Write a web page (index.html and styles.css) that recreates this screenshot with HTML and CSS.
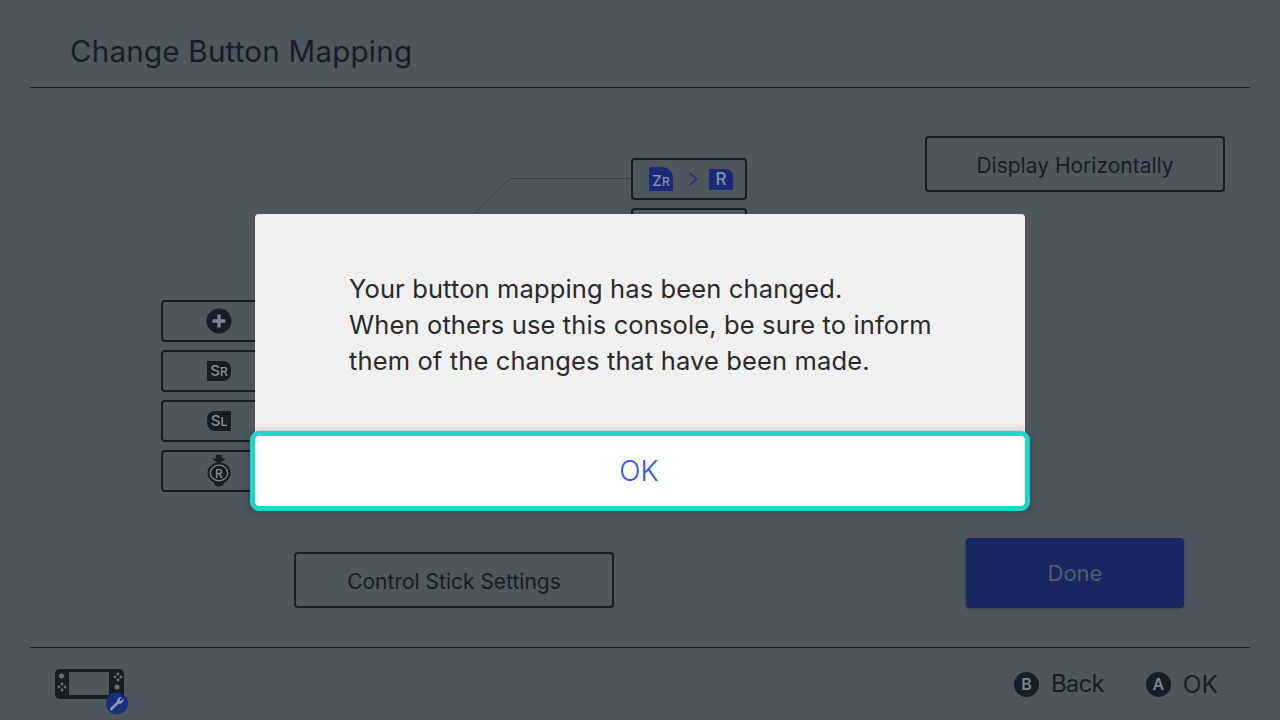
FILE: index.html
```html
<!DOCTYPE html>
<html lang="en">
<head>
<meta charset="utf-8">
<title>Change Button Mapping</title>
<link rel="stylesheet" href="styles.css">
</head>
<body>
<div class="screen">
  <header class="header"><h1 class="title">Change Button Mapping</h1></header>
  <main class="main">
    <section class="diagram">
      <svg class="leader" width="840" height="560" viewBox="0 0 840 560"><path d="M601 90.500H480L430 140.500" fill="none" stroke="#3a4149" stroke-width="1"/></svg>
      <div class="map-btn map-zr">
        <span class="tag tag-zr"><span class="tag-big">Z</span><span class="tag-small">R</span></span>
        <svg class="chev" width="10" height="14" viewBox="0 0 10 14"><path d="M1.500 1L8.500 7L1.500 13" fill="none" stroke="#1f2f6e" stroke-width="1.400"/></svg>
        <span class="tag tag-r">R</span>
      </div>
      <div class="map-btn map-next"></div>
      <div class="left-stack">
        <div class="map-btn">
          <svg width="26" height="26" viewBox="0 0 26 26"><circle cx="13" cy="13" r="12.500" fill="#151d27"/><path d="M13 6.500v13M6.500 13h13" stroke="#7d848d" stroke-width="3.400"/></svg>
        </div>
        <div class="map-btn"><span class="tag-s tag-sr"><span class="s-big">S</span><span class="s-small">R</span></span></div>
        <div class="map-btn"><span class="tag-s tag-sl"><span class="s-big">S</span><span class="s-small">L</span></span></div>
        <div class="map-btn">
          <svg width="26" height="32" viewBox="0 0 26 32"><path d="M10 0h6v3.500h4L13 9 6 3.500h4z" fill="#151d27"/><path d="M7 25h12l-1.500 4a4.500 2.500 0 0 1-9 0z" fill="#151d27"/><ellipse cx="13" cy="18" rx="11.500" ry="10.500" fill="#151d27"/><ellipse cx="13" cy="18" rx="8.700" ry="7.800" fill="none" stroke="#7d848d" stroke-width="1.300"/><text x="13" y="22.500" text-anchor="middle" class="stick-r">R</text></svg>
        </div>
      </div>
      <button class="outline-btn stick-btn">Control Stick Settings</button>
    </section>
    <aside class="side">
      <button class="outline-btn horiz-btn">Display Horizontally</button>
      <button class="done-btn">Done</button>
    </aside>
  </main>
  <footer class="footer">
    <div class="console">
      <svg width="74" height="50" viewBox="0 0 74 50">
        <rect x="1" y="2" width="69" height="30" rx="5" fill="#151d27"/>
        <rect x="15" y="5" width="40" height="23" fill="#4f565e"/>
        <g fill="#6a7078">
          <circle cx="7.500" cy="9" r="2.500"/><circle cx="8" cy="17" r="1.400"/><circle cx="8" cy="23" r="1.400"/><circle cx="5" cy="20" r="1.400"/><circle cx="11" cy="20" r="1.400"/>
          <circle cx="64" cy="7" r="1.400"/><circle cx="64" cy="13" r="1.400"/><circle cx="61" cy="10" r="1.400"/><circle cx="67" cy="10" r="1.400"/><circle cx="63" cy="20" r="2.500"/>
        </g>
        <circle cx="63" cy="36.500" r="11" fill="#1c2f7a"/>
        <path d="M57.500 42L64 35.500" fill="none" stroke="#8d97b8" stroke-width="2.600" stroke-linecap="round"/>
        <path d="M63 35.500a4.500 4.500 0 0 1 5-5.500l-2.500 2.600 1.300 1.500 2.700-2.500a4.500 4.500 0 0 1-5.500 5.300z" fill="#8d97b8"/>
      </svg>
    </div>
    <div class="hints">
      <div class="hint"><span class="glyph">B</span><span class="hint-back">Back</span></div>
      <div class="hint"><span class="glyph">A</span><span>OK</span></div>
    </div>
  </footer>
  <div class="dialog">
    <p class="message">Your button mapping has been changed.<br>When others use this console, be sure to inform<br>them of the changes that have been made.</p>
    <button class="ok-btn">OK</button>
  </div>
</div>
</body>
</html>
```
FILE: styles.css
```css
* { box-sizing: border-box; }
html, body { margin: 0; padding: 0; }
body { width: 1280px; height: 720px; overflow: hidden; background: #4f565e; font-family: Inter, "Noto Sans", sans-serif; color: #161d27; }
.screen { position: relative; width: 1280px; height: 720px; display: flex; flex-direction: column; padding: 0 30px; }
.header { height: 88px; flex: none; border-bottom: 1px solid #141a22; padding: 30px 0 0 40px; }
.title { margin: 0; font-size: 29.500px; letter-spacing: .25px; line-height: 42px; font-weight: 400; color: #161d27; }
.main { flex: 1; display: flex; min-height: 0; }
.diagram { position: relative; width: 840px; flex: none; }
.leader { position: absolute; left: 0; top: 0; }
.map-btn { width: 116px; height: 42px; border: 2px solid #151d27; border-radius: 4px; display: flex; align-items: center; justify-content: center; }
.map-zr { position: absolute; left: 601px; top: 70px; gap: 15px; padding-left: 4px; }
.chev { margin-right: -4px; }
.map-next { position: absolute; left: 601px; top: 120px; }
.left-stack { position: absolute; left: 131px; top: 212px; display: flex; flex-direction: column; gap: 8px; }
.tag { display: flex; align-items: center; justify-content: center; background: #1a2c75; color: #8791b0; font-weight: 500; }
.tag-zr { width: 24px; height: 24px; border-radius: 2px 11px 0 0; align-items: flex-end; padding-bottom: 1px; }
.tag-big { font-size: 15px; line-height: 19px; }
.tag-small { font-size: 12px; line-height: 17px; }
.tag-r { width: 24px; height: 21px; font-size: 17px; border-radius: 0 7px 0 0; }
.tag-s { display: flex; justify-content: center; align-items: baseline; width: 24px; height: 20px; background: #151d27; color: #8a9099; font-weight: 500; }
.tag-sr { border-radius: 0 8px 8px 0; }
.tag-sl { border-radius: 8px 0 0 8px; }
.s-big { font-size: 15px; line-height: 20px; }
.s-small { font-size: 12px; line-height: 20px; }
.stick-r { font-family: Inter, sans-serif; font-size: 12px; font-weight: 500; fill: #8a9099; }
.outline-btn { display: block; background: none; border: 2px solid #151d27; border-radius: 4px; font-family: inherit; font-size: 21px; color: #161d27; padding: 2px 0 0; }
.stick-btn { position: absolute; left: 264px; top: 464px; width: 320px; height: 56px; }
.side { flex: 1; display: flex; flex-direction: column; align-items: center; padding-top: 48px; padding-left: 30px; }
.horiz-btn { width: 300px; height: 56px; }
.done-btn { margin-top: 346px; width: 218px; height: 70px; background: #19275f; border: 0; border-radius: 4px; font-family: inherit; font-size: 22px; color: #535c6e; box-shadow: 0 1px 3px rgba(0,0,0,.3); }
.footer { height: 73px; flex: none; border-top: 1px solid #141a22; display: flex; align-items: flex-start; justify-content: space-between; padding: 0 32px 0 24px; }
.console { margin-top: 19px; height: 50px; }
.hints { display: flex; gap: 42px; margin-top: 16px; }
.hint { display: flex; align-items: center; gap: 12px; font-size: 24.500px; line-height: 40px; color: #161d27; }
.hint-back { font-size: 24px; letter-spacing: -.8px; }
.glyph { width: 25px; height: 25px; border-radius: 50%; background: #151d27; color: #7d848d; font-size: 16px; font-weight: 600; display: flex; align-items: center; justify-content: center; }
.dialog { position: absolute; left: 255px; top: 214px; width: 770px; height: 292px; background: #f0f0f1; border-radius: 4px; display: flex; flex-direction: column; }
.message { margin: 0; padding: 57px 0 0 94px; flex: 1; font-size: 25.500px; letter-spacing: .13px; line-height: 36px; color: #2a2a2a; }
.ok-btn { height: 70px; margin: 0; padding: 0 2px 0 0; background: #fff; border: 0; border-radius: 4px; font-family: inherit; font-size: 28px; font-weight: 300; color: #3653e6; outline: 5px solid #1fd6cd; box-shadow: 0 0 8px 5px rgba(0,0,0,.25); }
```
